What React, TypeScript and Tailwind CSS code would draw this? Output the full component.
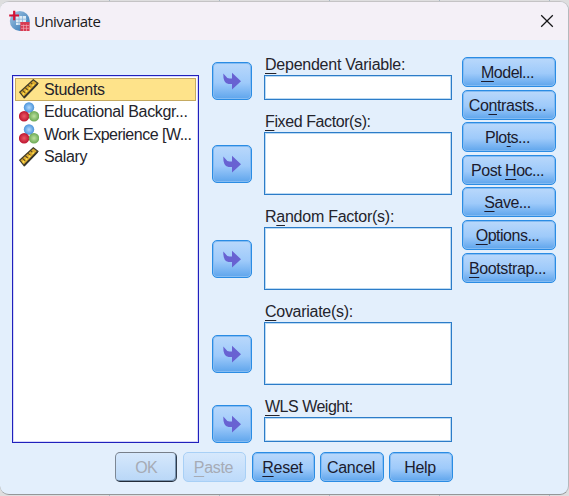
import React from "react";

function Mnemonic({ text, at }: { text: string; at?: number }) {
  if (at === undefined) return <>{text}</>;
  return (
    <>
      {text.slice(0, at)}
      <span className="underline decoration-1 underline-offset-[2.5px] [text-decoration-skip-ink:none]">{text[at]}</span>
      {text.slice(at + 1)}
    </>
  );
}

const blueFace =
  "border border-[#2a8ce4] bg-linear-to-b from-[#b9d8fb] via-[#9ecafa] via-55% to-[#5ea5ec] shadow-[inset_0_0_0_1px_#84bbf2]";

function Button({ text, at, className = "" }: { text: string; at?: number; className?: string }) {
  return (
    <button className={`flex h-[30px] shrink-0 items-center justify-center rounded-[5px] pt-[2px] pr-[2px] whitespace-nowrap tracking-[-0.5px] text-[#1b1b2e] ${blueFace} ${className}`}>
      <span><Mnemonic text={text} at={at} /></span>
    </button>
  );
}

function ArrowButton({ className = "" }: { className?: string }) {
  return (
    <button className={`flex h-[38px] w-10 shrink-0 items-center justify-center rounded-[5px] ${blueFace} ${className}`}>
      <svg width="18" height="18" viewBox="0 0 18 18" className="block">
        <path d="M0.3 1.5 L2.8 4.2 Q4 6.6 6.5 6.6 H9 V0.8 L18 9.2 L9 17.6 V12 H5.5 Q0 11.5 0.3 1.5Z" fill="#6862d2" />
      </svg>
    </button>
  );
}

function Field({ label, at, className, box }: { label: string; at: number; className: string; box: string }) {
  return (
    <div className={className}>
      <div className="h-[20px] pl-px leading-[20px] whitespace-nowrap"><Mnemonic text={label} at={at} /></div>
      <div className={`w-[188px] border border-[#2c7cc8] bg-white shadow-[inset_0_0_0_1px_#bcdaf3] ${box}`} />
    </div>
  );
}

function Ruler() {
  return (
    <svg width="20" height="20" viewBox="0 0 20 20" className="block">
      <path d="M0.7 13.2 L14.3 0.8 L18.9 4.3 L5.2 18.8Z" fill="#dba92f" stroke="#45402b" strokeWidth="1.3" />
      <path d="M3.5 11.3 L6 13.6 M6.2 8.7 L8.7 11 M8.9 6.1 L11.4 8.4 M11.6 3.6 L14 5.8" stroke="#5a4a21" strokeWidth="1.1" />
      <path d="M5.2 18.3 L18.4 4.9" stroke="#37352c" strokeWidth="1.8" />
      <path d="M3.8 14.2 L5 15.4 M7 11.6 L8.2 12.8 M10 8.8 L11.2 10 M13.4 5.4 L14.6 6.6" stroke="#ffe14d" strokeWidth="2" />
    </svg>
  );
}

function Nominal() {
  return (
    <svg width="20" height="20" viewBox="0 0 20 20" className="block">
      <defs>
        <radialGradient id="blueBall"><stop stopColor="#b2d8fb" /><stop offset="1" stopColor="#4b94dc" /></radialGradient>
        <radialGradient id="redBall"><stop stopColor="#ec5865" /><stop offset="1" stopColor="#bd1530" /></radialGradient>
        <radialGradient id="greenBall"><stop stopColor="#bde19f" /><stop offset="1" stopColor="#6ba954" /></radialGradient>
      </defs>
      <circle cx="10" cy="5.5" r="5.2" fill="url(#blueBall)" />
      <circle cx="5.1" cy="14.2" r="5.2" fill="url(#redBall)" />
      <circle cx="15" cy="14.2" r="5.2" fill="url(#greenBall)" />
    </svg>
  );
}

function AppIcon() {
  return (
    <svg width="22" height="22" viewBox="0 0 22 22" className="block">
      <defs>
        <linearGradient id="globe" x2="1" y2="1"><stop stopColor="#a9cae6" /><stop offset="1" stopColor="#276eaf" /></linearGradient>
      </defs>
      <circle cx="10.8" cy="11" r="10" fill="url(#globe)" />
      <path d="M7 6H17V15H7Z" fill="#dcebf6" />
      <path d="M7 9.2H18M7 12.5H16M10 6V15M13.5 6V13" stroke="#8bb4d8" strokeWidth="0.8" />
      <path d="M5.2 0.8V10.2M0.2 5.5H10" stroke="#d51135" strokeWidth="2.2" />
      <path d="M11.3 12H20.6V21H11.3Z" fill="#d83b52" />
      <path d="M12 15.5H20M12 18.3H20M14.5 14.5V21M17.5 14.5V21" stroke="#f0a4b0" strokeWidth="0.7" />
    </svg>
  );
}

const variables = [
  { name: "Students", kind: "scale", spacing: "tracking-[-0.3px]" },
  { name: "Educational Backgr...", kind: "nominal", spacing: "tracking-[-0.32px]" },
  { name: "Work Experience [W...", kind: "nominal", spacing: "tracking-[-0.5px]" },
  { name: "Salary", kind: "scale", spacing: "tracking-[-0.35px]" },
];

export default function App() {
  return (
    <div className="h-[496px] w-[569px] overflow-hidden bg-[#dededf] bg-[repeating-linear-gradient(90deg,transparent_0_109px,#a9bac7_109px_110px)] pt-px font-['Liberation_Sans',Arial,sans-serif] text-[16px] text-[#24242c]">
      <div className="h-[494px] w-[569px] overflow-hidden rounded-[9px] border-t border-r border-b border-t-[#c4c3c5] border-r-[#b5b8bc] border-b-[#949799] bg-[#e3effc]">
        <header className="flex h-[38px] items-center bg-[#f4f0f7] pl-[9px]">
          <AppIcon />
          <h1 className="ml-[3px] font-['Open_Sans','Noto_Sans',sans-serif] text-[15px] leading-[22px] tracking-[-0.55px] text-[#1a1a1c]">Univariate</h1>
          <svg width="14" height="14" viewBox="0 0 14 14" className="mr-[14px] ml-auto block" fill="none" stroke="#151517" strokeWidth="1.25"><path d="M1.2 1.2 12.8 12.8M12.8 1.2 1.2 12.8" /></svg>
        </header>
        <main className="flex h-[403px] pl-3">
          <div className="mt-[35px] h-[368px] w-[187px] shrink-0 border border-[#2020bc] bg-white p-[2px] shadow-[inset_0_0_0_1px_#d7d7fa]">
            {variables.map((v, i) => (
              <div key={v.name} className={`flex h-[22.5px] items-center gap-[5px] whitespace-nowrap ${i === 0 ? "border border-[#c5aa61] bg-[#fee38a] pl-[3px]" : "pl-[4px]"}`}>
                {v.kind === "scale" ? <Ruler /> : <Nominal />}
                <span className={`pt-px ${v.spacing}`}>{v.name}</span>
              </div>
            ))}
          </div>
          <div className="ml-[12.5px] flex flex-col pt-[22px]">
            <ArrowButton />
            <ArrowButton className="mt-[45px]" />
            <ArrowButton className="mt-[57px]" />
            <ArrowButton className="mt-[57px]" />
            <ArrowButton className="mt-[32px]" />
          </div>
          <div className="ml-[12.5px] flex flex-col pt-[15px]">
            <Field label="Dependent Variable:" at={0} className="tracking-[-0.24px]" box="h-[25px]" />
            <Field label="Fixed Factor(s):" at={0} className="mt-[12px] tracking-[-0.4px]" box="h-[63px]" />
            <Field label="Random Factor(s):" at={1} className="mt-[12px] tracking-[-0.25px]" box="h-[63px]" />
            <Field label="Covariate(s):" at={0} className="mt-[12px] tracking-[-0.28px]" box="h-[63px]" />
            <Field label="WLS Weight:" at={0} className="mt-[12px] tracking-[-0.5px]" box="h-[25px]" />
          </div>
          <div className="ml-[9.5px] flex flex-col gap-[2.6px] pt-[17px]">
            <Button text="Model..." at={0} className="w-[94px]" />
            <Button text="Contrasts..." at={2} className="w-[94px] tracking-[-0.35px]!" />
            <Button text="Plots..." at={3} className="w-[94px]" />
            <Button text="Post Hoc..." at={5} className="w-[94px]" />
            <Button text="Save..." at={0} className="w-[94px]" />
            <Button text="Options..." at={0} className="w-[94px]" />
            <Button text="Bootstrap..." at={0} className="w-[94px] tracking-[-0.4px]!" />
          </div>
        </main>
        <footer className="flex pt-[9px] pl-[115px]">
          <button className="flex h-[30px] w-[62px] items-center justify-center rounded-[5px] border border-t-[#777f8a] border-r-[#303c4c] border-b-[#222c39] border-l-[#7c8794] bg-linear-to-b from-[#d6e8fc] to-[#b9d7f7] pt-[2px] tracking-[-0.8px] text-[#a6abb5] shadow-[inset_-1px_-1px_0_#7591ae]">OK</button>
          <button className="ml-[6px] flex h-[30px] w-[63px] items-center justify-center rounded-[5px] border border-[#a8d0f6] bg-linear-to-b from-[#d6e8fc] to-[#bddafa] pt-[2px] pr-[2px] tracking-[-0.3px] text-[#a6abb5]"><span><Mnemonic text="Paste" at={0} /></span></button>
          <Button text="Reset" at={0} className="ml-[6px] w-[63px] tracking-[-0.3px]!" />
          <Button text="Cancel" className="ml-[5px] w-[64px] tracking-[-0.3px]!" />
          <Button text="Help" className="ml-[5px] w-[64px] tracking-[-0.3px]!" />
        </footer>
      </div>
    </div>
  );
}
